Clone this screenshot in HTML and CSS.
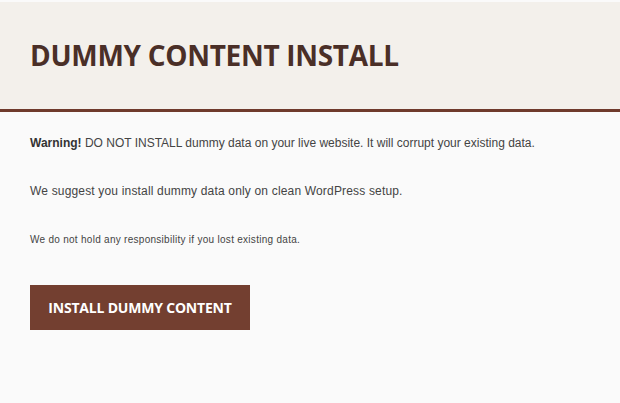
FILE: index.html
```html
<!DOCTYPE html>
<html>
<head>
<meta charset="utf-8">
<link rel="stylesheet" href="styles.css">
</head>
<body>
<div class="page">
  <header class="head">
    <h1 class="title">DUMMY CONTENT INSTALL</h1>
  </header>
  <main class="content">
    <p class="msg"><strong>Warning!</strong> DO NOT INSTALL dummy data on your live website. It will corrupt your existing data.</p>
    <p class="msg msg-wide">We suggest you install dummy data only on clean WordPress setup.</p>
    <p class="note">We do not hold any responsibility if you lost existing data.</p>
    <button class="btn">INSTALL DUMMY CONTENT</button>
  </main>
</div>
</body>
</html>
```
FILE: styles.css
```css
html, body {
  margin: 0;
  padding: 0;
  background: #fafafa;
}
.page {
  padding-top: 2px;
}
.head {
  background: #f3f0eb;
  border-bottom: 3px solid #6f3a2c;
  padding: 33px 30px 34px;
}
.title {
  margin: 0;
  font-family: "Open Sans", sans-serif;
  font-weight: 700;
  font-size: 28px;
  line-height: 40px;
  letter-spacing: -0.3px;
  color: #4a2f27;
}
.content {
  padding: 22px 30px 0;
  font-family: "Liberation Sans", Arial, sans-serif;
  color: #444;
}
.msg {
  margin: 0 0 30px;
  font-size: 12px;
  line-height: 18px;
}
.msg-wide {
  margin-bottom: 31px;
  letter-spacing: 0.17px;
}
.msg strong {
  color: #333;
}
.note {
  margin: 0 0 36px;
  font-size: 10px;
  line-height: 18px;
  letter-spacing: 0.28px;
}
.btn {
  display: block;
  border: 0;
  margin: 0;
  width: 220px;
  height: 45px;
  padding: 0;
  background: #733f30;
  color: #fff;
  font-family: "Open Sans", sans-serif;
  font-weight: 700;
  font-size: 14px;
  letter-spacing: -0.2px;
  cursor: pointer;
}
```
